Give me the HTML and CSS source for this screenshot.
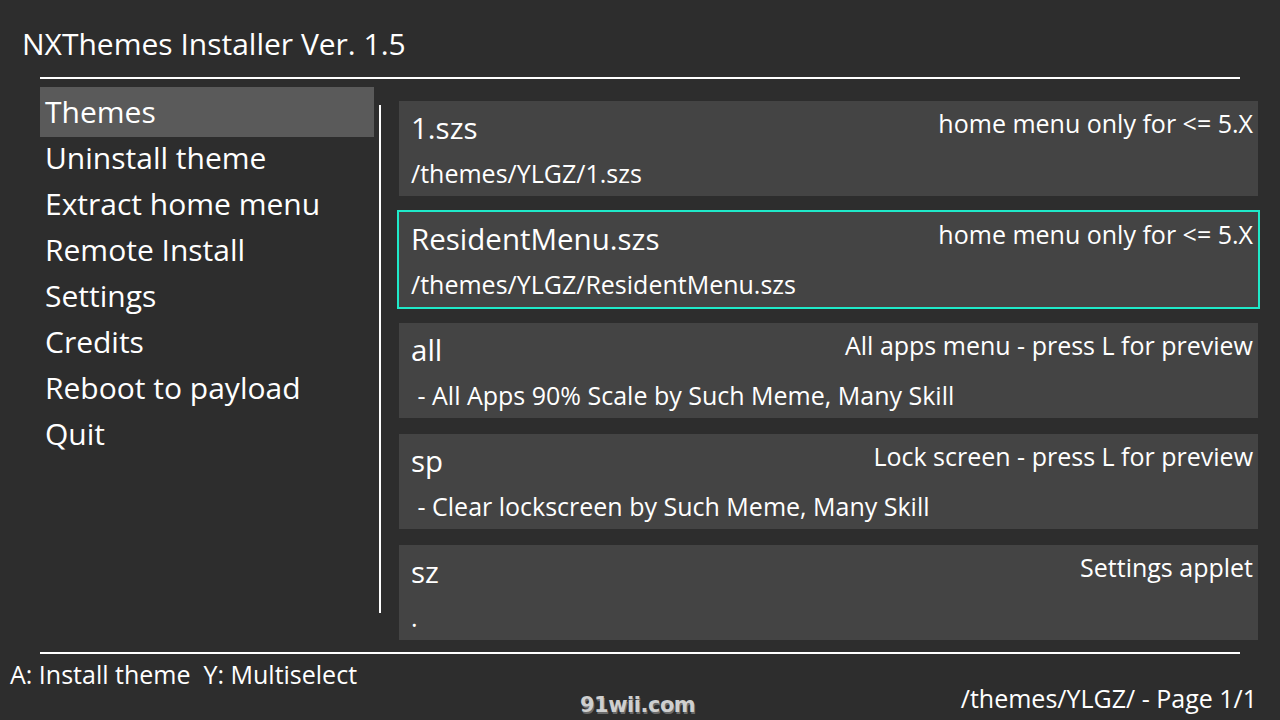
FILE: index.html
```html
<!DOCTYPE html>
<html lang="en">
<head>
  <meta charset="UTF-8">
  <meta name="viewport" content="width=device-width, initial-scale=1.0">
  <title>NXThemes Installer</title>
  <link rel="stylesheet" href="styles.css">
</head>
<body>
  <div class="screen">
    <h1 class="title">NXThemes Installer Ver. 1.5</h1>
    <div class="rule"></div>

    <div class="main">
      <ul class="menu">
        <li class="menu-item active">Themes</li>
        <li class="menu-item">Uninstall theme</li>
        <li class="menu-item">Extract home menu</li>
        <li class="menu-item">Remote Install</li>
        <li class="menu-item">Settings</li>
        <li class="menu-item">Credits</li>
        <li class="menu-item">Reboot to payload</li>
        <li class="menu-item">Quit</li>
      </ul>
      <div class="divider"></div>

      <div class="list">
        <div class="card">
          <div class="card-head">
            <span class="card-name">1.szs</span>
            <span class="card-type">home menu only for &lt;= 5.X</span>
          </div>
          <div class="card-desc">/themes/YLGZ/1.szs</div>
        </div>
        <div class="card selected">
          <div class="card-head">
            <span class="card-name">ResidentMenu.szs</span>
            <span class="card-type">home menu only for &lt;= 5.X</span>
          </div>
          <div class="card-desc">/themes/YLGZ/ResidentMenu.szs</div>
        </div>
        <div class="card">
          <div class="card-head">
            <span class="card-name">all</span>
            <span class="card-type">All apps menu - press L for preview</span>
          </div>
          <div class="card-desc">&nbsp;- All Apps 90% Scale by Such Meme, Many Skill</div>
        </div>
        <div class="card">
          <div class="card-head">
            <span class="card-name">sp</span>
            <span class="card-type">Lock screen - press L for preview</span>
          </div>
          <div class="card-desc">&nbsp;- Clear lockscreen by Such Meme, Many Skill</div>
        </div>
        <div class="card">
          <div class="card-head">
            <span class="card-name">sz</span>
            <span class="card-type">Settings applet</span>
          </div>
          <div class="card-desc">.</div>
        </div>
      </div>
    </div>

    <div class="rule bottom"></div>
    <div class="footer">
      <div class="hints">A: Install theme&nbsp; Y: Multiselect</div>
      <div class="status">/themes/YLGZ/ - Page 1/1</div>
    </div>

    <div class="watermark">91wii.com</div>
  </div>
</body>
</html>
```

FILE: styles.css
```css
body {
  margin: 0;
  padding: 0;
  background: #2d2d2d;
  color: #fff;
  font-family: "Open Sans", "Noto Sans", sans-serif;
}
ul {
  list-style: none;
  margin: 0;
  padding: 0;
}

.screen {
  width: 1280px;
  height: 720px;
  position: relative;
  overflow: hidden;
}
.title {
  margin: 0;
  padding: 25px 0 0 22px;
  height: 52px;
  font-size: 30px;
  font-weight: normal;
  line-height: 38px;
}
.rule {
  height: 2px;
  margin: 0 40px;
  background: #fff;
}

.main {
  display: flex;
  height: 573px;
}
.menu {
  width: 334px;
  margin-left: 40px;
  padding-top: 10px;
}
.menu-item {
  height: 46px;
  line-height: 46px;
  padding-left: 5px;
  font-size: 30px;
}
.menu-item.active {
  height: 50px;
  line-height: 50px;
  margin: -2px 0;
  background: #5a5a5a;
}
.divider {
  width: 2px;
  height: 508px;
  margin: 26px 0 0 5px;
  background: #fff;
}

.list {
  width: 859px;
  margin-left: 18px;
  padding-top: 22px;
  display: flex;
  flex-direction: column;
  gap: 16px;
}
.card {
  height: 95px;
  background: #444;
  padding: 0 5px 0 12px;
  box-sizing: border-box;
}
.card.selected {
  outline: 2px solid #1fe9c9;
}
.card-head {
  display: flex;
  justify-content: space-between;
  align-items: flex-start;
}
.card-name {
  padding-top: 10px;
  font-size: 29.5px;
  line-height: 34px;
}
.card-type {
  margin-top: 7px;
  font-size: 25px;
  line-height: 30px;
}
.card-desc {
  margin-top: 13px;
  font-size: 25px;
  line-height: 30px;
}

.footer {
  display: flex;
  flex-direction: column;
  padding: 0 23px 0 10px;
  font-size: 25px;
  line-height: 28px;
}
.hints {
  margin-top: 6px;
}
.status {
  align-self: flex-end;
  margin-top: -4px;
}

.watermark {
  position: absolute;
  left: 580px;
  top: 693px;
  font-family: "DejaVu Sans", sans-serif;
  font-weight: bold;
  font-size: 21px;
  letter-spacing: -0.5px;
  color: #cfcfcf;
  text-shadow: 1px 2px 0 #6a6a6a;
}
```
